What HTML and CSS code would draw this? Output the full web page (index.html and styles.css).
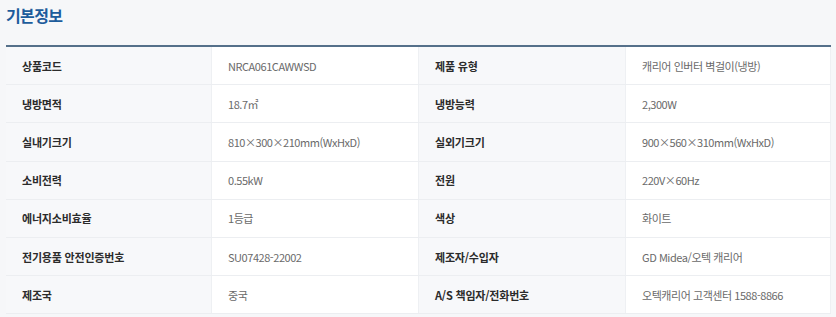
FILE: index.html
```html
<!DOCTYPE html>
<html lang="ko">
<head>
<meta charset="utf-8">
<link rel="stylesheet" href="styles.css">
</head>
<body>
<div class="page">
  <h2 class="title">기본정보</h2>
  <div class="spec">
    <div class="row"><div class="lbl">상품코드</div><div class="val">NRCA061CAWWSD</div><div class="lbl">제품 유형</div><div class="val">캐리어 인버터 벽걸이(냉방)</div></div>
    <div class="row"><div class="lbl">냉방면적</div><div class="val">18.7㎡</div><div class="lbl">냉방능력</div><div class="val">2,300W</div></div>
    <div class="row"><div class="lbl">실내기크기</div><div class="val">810×300×210mm(WxHxD)</div><div class="lbl">실외기크기</div><div class="val">900×560×310mm(WxHxD)</div></div>
    <div class="row"><div class="lbl">소비전력</div><div class="val">0.55kW</div><div class="lbl">전원</div><div class="val">220V×60Hz</div></div>
    <div class="row"><div class="lbl">에너지소비효율</div><div class="val">1등급</div><div class="lbl">색상</div><div class="val">화이트</div></div>
    <div class="row"><div class="lbl">전기용품 안전인증번호</div><div class="val">SU07428-22002</div><div class="lbl">제조자/수입자</div><div class="val">GD Midea/오텍 캐리어</div></div>
    <div class="row last"><div class="lbl">제조국</div><div class="val">중국</div><div class="lbl">A/S 책임자/전화번호</div><div class="val">오텍캐리어 고객센터 1588-8866</div></div>
  </div>
</div>
</body>
</html>
```
FILE: styles.css
```css
html, body {
  margin: 0;
  padding: 0;
  background: #f6f7f9;
}
body {
  font-family: "Noto Sans CJK KR", "Noto Sans", sans-serif;
}
.page {
  padding: 3px 5px 0 6px;
}
.title {
  margin: 0;
  font-size: 16px;
  font-weight: 700;
  line-height: 24px;
  color: #1d5c9c;
  letter-spacing: -0.6px;
}
.spec {
  margin-top: 18px;
  border-top: 2px solid #55708a;
  width: 825px;
}
.row {
  display: grid;
  grid-template-columns: 205px 208px 206px 206px;
  height: 37.2px;
  border-bottom: 1px solid #eceef1;
}
.lbl, .val {
  display: flex;
  align-items: center;
  font-size: 11px;
  line-height: 14px;
}
.lbl {
  background: #f7f8fa;
  color: #2b2b2b;
  font-weight: 700;
  padding-left: 16px;
  letter-spacing: -0.2px;
}
.val {
  background: #ffffff;
  color: #6a6a6a;
  padding-left: 16px;
  letter-spacing: -0.45px;
  border-left: 1px solid #eef0f3;
  border-right: 1px solid #eef0f3;
}
```
